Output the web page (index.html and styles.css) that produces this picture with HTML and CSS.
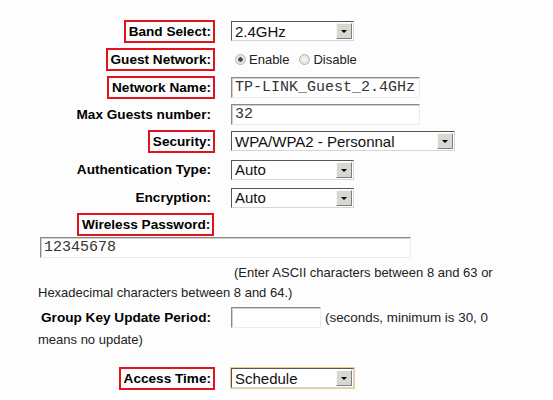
FILE: index.html
```html
<!DOCTYPE html>
<html lang="en">
<head>
    <meta charset="UTF-8">
    <title>Guest Network Settings</title>
    <link rel="stylesheet" href="styles.css">
</head>
<body>
    <div class="form">
        <div class="row h28">
            <div class="label"><span class="mark">Band Select:</span></div>
            <div class="field">
                <div class="select short"><select><option>2.4GHz</option></select></div>
            </div>
        </div>
        <div class="row h28">
            <div class="label"><span class="mark">Guest Network:</span></div>
            <div class="field radios">
                <input type="radio" class="radio" name="guest" checked> Enable
                <input type="radio" class="radio second" name="guest"> Disable
            </div>
        </div>
        <div class="row h29">
            <div class="label"><span class="mark">Network Name:</span></div>
            <div class="field"><input type="text" class="text name" value="TP-LINK_Guest_2.4GHz"></div>
        </div>
        <div class="row h25">
            <div class="label plain">Max Guests number:</div>
            <div class="field"><input type="text" class="text name" value="32"></div>
        </div>
        <div class="row h28">
            <div class="label"><span class="mark">Security:</span></div>
            <div class="field">
                <div class="select wide"><select><option>WPA/WPA2 - Personnal</option></select></div>
            </div>
        </div>
        <div class="row h29">
            <div class="label plain">Authentication Type:</div>
            <div class="field">
                <div class="select short"><select><option>Auto</option></select></div>
            </div>
        </div>
        <div class="row h27">
            <div class="label plain">Encryption:</div>
            <div class="field">
                <div class="select short"><select><option>Auto</option></select></div>
            </div>
        </div>

        <div class="pass-label"><span class="mark">Wireless Password:</span></div>
        <input type="text" class="text password" value="12345678">
        <p class="help">(Enter ASCII characters between 8 and 63 or<br>Hexadecimal characters between 8 and 64.)</p>

        <div class="row h28">
            <div class="label plain">Group Key Update Period:</div>
            <div class="field"><input type="text" class="text period" value=""> <span class="note">(seconds, minimum is 30, 0</span></div>
        </div>
        <p class="note-line">means no update)</p>

        <div class="row h28 access">
            <div class="label"><span class="mark">Access Time:</span></div>
            <div class="field">
                <div class="select short focus"><select><option>Schedule</option></select></div>
            </div>
        </div>
    </div>
</body>
</html>
```

FILE: styles.css
```css
body {
    margin: 0;
    background-color: #fdfdfd;
    font-family: 'Liberation Sans', Arial, sans-serif;
    font-size: 13px;
    color: #1a1a1a;
}
.form {
    padding-top: 17px;
}
.row {
    display: flex;
    align-items: center;
}
.h25 { height: 25px; }
.h27 { height: 27px; }
.h28 { height: 28px; }
.h29 { height: 29px; }
.label {
    width: 215px;
    flex: none;
    text-align: right;
    font-size: 13.6px;
    font-weight: bold;
    color: #000;
}
.label.plain {
    padding-right: 4px;
    box-sizing: border-box;
}
.mark {
    display: inline-block;
    border: 2px solid #e0141e;
    padding: 2px 2px 2px 3px;
    line-height: 15px;
    font-size: 13.6px;
    font-weight: bold;
    color: #000;
}
.field {
    margin-left: 16px;
    display: flex;
    align-items: center;
}

/* dropdowns */
.select {
    position: relative;
    height: 20px;
}
.select.short { width: 123px; }
.select.wide { width: 224px; }
.select select {
    -webkit-appearance: none;
    appearance: none;
    width: 100%;
    height: 100%;
    box-sizing: border-box;
    border: 1px solid;
    border-color: #555 #d6d6d6 #d6d6d6 #555;
    border-radius: 0;
    background-color: #fff;
    font-family: 'Liberation Sans', Arial, sans-serif;
    font-size: 15px;
    color: #111;
    padding: 0 18px 0 3px;
    outline: none;
}
.select::after {
    content: "";
    position: absolute;
    right: 2px;
    top: 2px;
    bottom: 2px;
    width: 16px;
    box-sizing: border-box;
    background-color: #d9d7d1;
    border: 1px solid;
    border-color: #f6f6f6 #7e7e7e #7e7e7e #f6f6f6;
}
.select::before {
    content: "";
    position: absolute;
    z-index: 1;
    right: 7px;
    top: 9px;
    border-left: 3px solid transparent;
    border-right: 3px solid transparent;
    border-top: 3px solid #000;
}
.select.focus {
    box-shadow: 0 0 0 1px #e9cf8c;
}

/* radios */
.radios {
    color: #222;
}
.radio {
    -webkit-appearance: none;
    appearance: none;
    width: 11px;
    height: 11px;
    margin: 0 3px 0 4px;
    border: 1px solid #b4b4b4;
    border-radius: 50%;
    box-sizing: border-box;
    background: radial-gradient(circle, #fafafa 0, #d8d8d8 100%);
}
.radio:checked {
    background: radial-gradient(circle, #4a4a4a 0 2px, #e6e6e6 2.5px);
}
.radio.second {
    margin-left: 10px;
}

/* text inputs */
.text {
    height: 21px;
    box-sizing: border-box;
    border: 1px solid;
    border-color: #8a8a8a #ececec #ececec #8a8a8a;
    box-shadow: inset 1px 1px 0 #cfcfcf;
    background-color: #fff;
    font-family: 'Liberation Mono', 'Courier New', monospace;
    font-size: 15px;
    color: #333;
    padding: 0 3px;
    margin: 0;
    outline: none;
}
.text.name { width: 189px; }
.text.period { width: 90px; }
.text.password {
    display: block;
    width: 371px;
    margin-left: 40px;
}
.pass-label {
    height: 26px;
    padding-left: 77px;
    display: flex;
    align-items: center;
}
.help {
    margin: 5px 0 0;
    padding-left: 38px;
    text-indent: 196px;
    line-height: 20px;
    color: #222;
}
.note {
    margin-left: 4px;
    font-size: 13.4px;
    color: #222;
}
.note-line {
    margin: 0;
    padding-left: 38px;
    line-height: 18px;
    color: #222;
}
.access {
    margin-top: 15px;
}
```
